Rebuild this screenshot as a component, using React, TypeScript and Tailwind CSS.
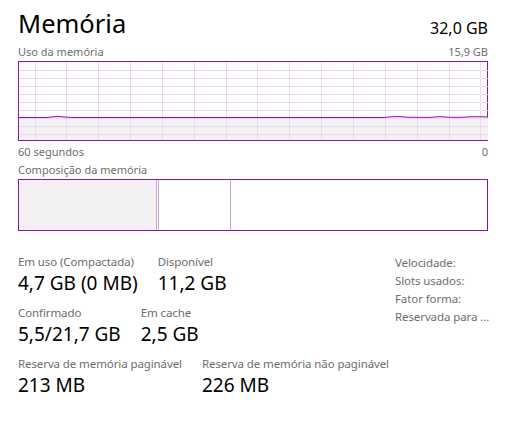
import React from "react";

const PURPLE = "#8b12ae";

function UsageGraph() {
    const w = 469;
    const h = 78;
    const vLines = Array.from({length: 15}, (_, i) => 15.5 + i * 31.85);
    const hLines = Array.from({length: 9}, (_, i) => 8 + i * 8);
    const line = "M0 55.5 L28 55.5 L34 54.8 L40 54.5 L48 55.2 L56 55.5 L365 55.5 L372 54.8 L380 54.6 L390 55.3 L410 55.4 L420 54.7 L432 55.3 L440 55.4 L452 54.8 L462 54.7 L469 55";
    return (
        <div className="h-[80px] border border-[#8b12ae]">
            <svg width={w} height={h} className="block">
                <path d={`${line} L469 78 L0 78 Z`} fill="#f3f1f4"/>
                {vLines.map((x, i) => (
                    <line key={i} x1={Math.round(x) + 0.5} y1={0} x2={Math.round(x) + 0.5} y2={h} stroke="#ead8f0" strokeWidth={1}/>
                ))}
                {hLines.map((y, i) => (
                    <line key={i} x1={0} y1={y + 0.5} x2={w} y2={y + 0.5} stroke="#ead8f0" strokeWidth={1}/>
                ))}
                <path d={line} fill="none" stroke={PURPLE} strokeWidth={1}/>
            </svg>
        </div>
    );
}

function Stat({label, value}: { label: string; value: string }) {
    return (
        <div className="flex flex-col whitespace-nowrap">
            <span className="text-[11.5px] leading-[16px] tracking-[-0.1px] text-[#6d6d6d]">{label}</span>
            <span className="text-[19px] leading-[27px] text-black">{value}</span>
        </div>
    );
}

export default function App() {
    return (
        <div
            className="w-[505px] h-[421px] bg-white pl-[18px] pr-[17px] pt-[6px]"
            style={{fontFamily: '"Noto Sans", "Open Sans", sans-serif'}}
        >
            <div className="flex items-end justify-between">
                <span className="text-[25.5px] leading-[34px] text-black">Memória</span>
                <span className="text-[16px] leading-[22px] mb-[1px] text-black">32,0 GB</span>
            </div>
            <div className="flex justify-between text-[11px] leading-[15px] text-[#6d6d6d] mt-[4px] mb-[2px]">
                <span>Uso da memória</span>
                <span>15,9 GB</span>
            </div>
            <UsageGraph/>
            <div className="flex justify-between text-[11px] leading-[15px] text-[#6d6d6d] mt-[3px]">
                <span>60 segundos</span>
                <span>0</span>
            </div>
            <div className="text-[11px] leading-[15px] text-[#6d6d6d] mt-[3px] mb-[2px]">
                Composição da memória
            </div>
            <div className="h-[52px] border border-[#8b12ae] flex">
                <div className="w-[138px] bg-[#f3f1f4] border-r border-[#c9a6d6]"/>
                <div className="w-[1px]"/>
                <div className="w-[73px] border-l border-r border-[#c9a6d6]"/>
            </div>
            <div className="flex justify-between mt-[23px]">
                <div className="flex flex-col gap-[8px]">
                    <div className="flex gap-[20px]">
                        <Stat label="Em uso (Compactada)" value="4,7 GB (0 MB)"/>
                        <Stat label="Disponível" value="11,2 GB"/>
                    </div>
                    <div className="flex gap-[20px]">
                        <Stat label="Confirmado" value="5,5/21,7 GB"/>
                        <Stat label="Em cache" value="2,5 GB"/>
                    </div>
                    <div className="flex gap-[20px]">
                        <Stat label="Reserva de memória paginável" value="213 MB"/>
                        <Stat label="Reserva de memória não paginável" value="226 MB"/>
                    </div>
                </div>
                <div className="flex flex-col w-[93px] whitespace-nowrap text-[11.5px] leading-[18px] tracking-[-0.1px] text-[#6d6d6d]">
                    <span>Velocidade:</span>
                    <span>Slots usados:</span>
                    <span>Fator forma:</span>
                    <span>Reservada para ...</span>
                </div>
            </div>
        </div>
    );
}
